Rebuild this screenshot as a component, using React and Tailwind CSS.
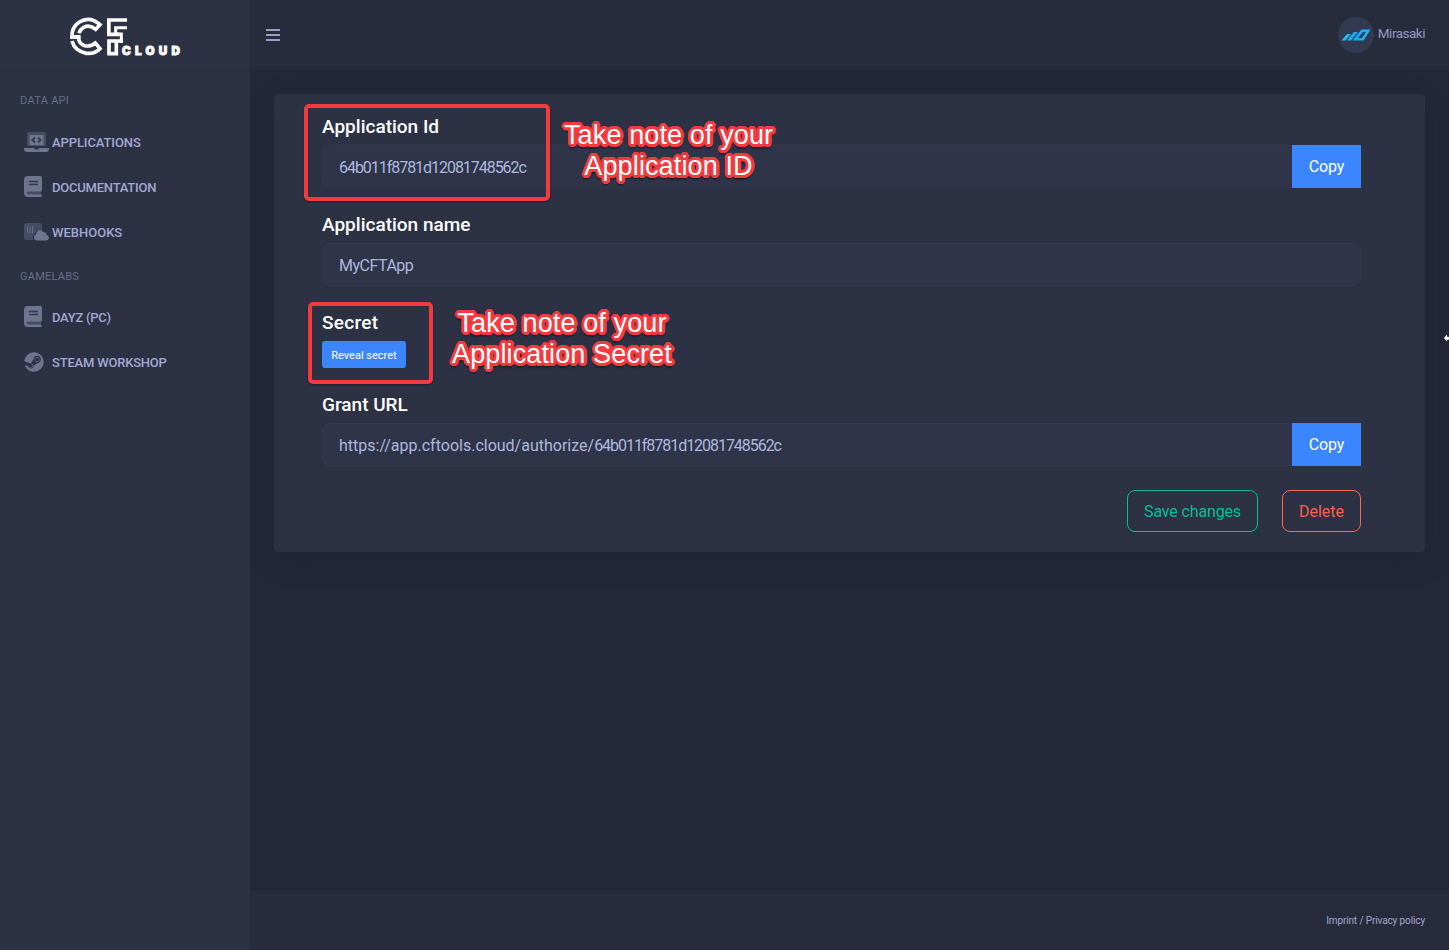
import { FaSteam } from "react-icons/fa";

function Logo() {
  return (
    <svg className="h-[40px] w-[113px] overflow-visible" viewBox="60 36 339 120" fill="none" aria-label="CF Cloud">
      <g stroke="#fffffc" strokeWidth="11">
        <path d="M92 98H66Q64 70 87 54Q119 33 150 61L137 75Q119 60 101 69Q91 74 87 87" transform="translate(0 -2)" />
        <path d="M61 96H85Q86 116 104 122Q122 126 136 114L150 131Q135 147 109 145Q74 138 66 108" />
        <path d="M231 45H176.500V88H208" />
        <path d="M231 68H197V87H214V113" strokeWidth="9" />
        <path d="M219 108H177V146H199V108" />
      </g>
      <text x="216" y="149" fill="#fffffc" stroke="#fffffc" strokeWidth="2.500" fontFamily="Inter, sans-serif" fontWeight="900" fontSize="35" textLength="174" lengthAdjust="spacing">CLOUD</text>
    </svg>
  );
}

function LaptopIcon() {
  return (
    <svg className="h-5 w-[25px]" viewBox="0 0 25 20">
      <path d="M3 14V2Q3 0 5 0H20Q22 0 22 2V14H19V3H6V14Z" fill="#474c65" />
      <path d="M5.500 3H19.500V13.500H5.500Z M0 16H10L11 17.500H14L15 16H25V17Q25 20 22 20H3Q0 20 0 17Z" fill="#6f748f" />
      <path d="M11 5.500L8.500 8L11 10.500M14 5.500L16.500 8L14 10.500" fill="none" stroke="#363b51" strokeWidth="2" />
    </svg>
  );
}

function BookIcon() {
  return (
    <svg className="h-[21px] w-[18px]" viewBox="0 0 18 21">
      <path d="M4 0H16.500Q18 0 18 1.500V14Q18 15.200 17 15.700V19Q18 19.400 18 20Q18 21 17 21H4Q0 21 0 17V4Q0 0 4 0Z" fill="#6f748f" />
      <path d="M4 15.600H17V18.400H4Q2.500 18.400 2.500 17Q2.500 15.600 4 15.600Z" fill="#474c65" />
      <path d="M5 5.500H14M5 8.500H14" stroke="#34394f" strokeWidth="1.300" />
    </svg>
  );
}

function CloudIcon() {
  return (
    <svg className="h-[18px] w-[25px]" viewBox="0 0 25 18">
      <path d="M2 0H16Q18 0 18 2V7Q12 5 11 11Q8 13 9.500 17H2Q0 17 0 15V2Q0 0 2 0Z" fill="#474c65" />
      <path d="M3.500 3V10M6 3V10M8.500 3V10" stroke="#686d88" strokeWidth="1" />
      <path d="M13 17.500Q10 17 10 14.200Q10 12 12 11.500Q12 7.500 15.500 7Q18 7 19.500 9.300Q22.500 8.500 22.500 11.700Q25 12.500 25 14.800Q24.500 17.500 22 17.500Z" fill="#6f748f" />
    </svg>
  );
}

function NavItem({ icon, label, track }) {
  return (
    <a className="flex h-[45px] items-center pl-6">
      <span className="flex w-7 shrink-0 items-center pb-0.5">{icon}</span>
      <span className={`whitespace-nowrap text-[13px] font-medium text-[#a3a8d2] ${track}`}>{label}</span>
    </a>
  );
}

function Field({ label, value, copy }) {
  return (
    <div>
      <h2 className="h-[27px] text-[19px] leading-[17px] font-medium text-white">{label}</h2>
      <div className="flex h-[43px]">
        <div className={`flex flex-1 items-center border border-[#34394e] bg-[#2f3448] px-4 pt-0.5 text-base text-[#aeb8df] ${copy ? "rounded-l-lg border-r-0" : "rounded-lg"}`}>
          {value}
        </div>
        {copy && <button className="w-[69px] bg-[#3b86ff] text-base tracking-[-0.150px] text-white">Copy</button>}
      </div>
    </div>
  );
}

function Note({ place, first, second }) {
  return (
    <div className={`absolute whitespace-nowrap text-center font-['Liberation_Sans',Arial,sans-serif] text-[27px] leading-[31px] tracking-[0.120px] text-white [text-shadow:3px_0_#f33b3f,2.8px_1.1px_#f33b3f,2.1px_2.1px_#f33b3f,1.1px_2.8px_#f33b3f,0_3px_#f33b3f,-1.1px_2.8px_#f33b3f,-2.1px_2.1px_#f33b3f,-2.8px_1.1px_#f33b3f,-3px_0_#f33b3f,-2.8px_-1.1px_#f33b3f,-2.1px_-2.1px_#f33b3f,-1.1px_-2.8px_#f33b3f,0_-3px_#f33b3f,1.1px_-2.8px_#f33b3f,2.1px_-2.1px_#f33b3f,2.8px_-1.1px_#f33b3f,1px_4px_2px_#151722,-1px_4px_2px_#151722] ${place}`}>
      {first}<br />{second}
    </div>
  );
}

export default function App() {
  return (
    <div className="relative flex h-[950px] w-full overflow-hidden bg-[#242737] font-[Roboto,sans-serif]">
      <aside className="flex w-[250px] shrink-0 flex-col bg-[#2c3144]">
        <div className="flex h-[71px] border-b border-[#2a2e41] pt-[17px] pl-[70px]"><Logo /></div>
        <p className="mt-[22px] h-[27px] pl-5 text-[11px] leading-4 tracking-[0.300px] text-[#696e88]">DATA API</p>
        <NavItem icon={<LaptopIcon />} label="APPLICATIONS" track="tracking-[-0.1px]" />
        <NavItem icon={<BookIcon />} label="DOCUMENTATION" track="tracking-[-0.220px]" />
        <NavItem icon={<CloudIcon />} label="WEBHOOKS" track="tracking-[0px]" />
        <p className="mt-[14px] h-[26px] pl-5 text-[11px] leading-4 tracking-[0.250px] text-[#696e88]">GAMELABS</p>
        <NavItem icon={<BookIcon />} label="DAYZ (PC)" track="tracking-[-0.250px]" />
        <NavItem icon={<FaSteam className="size-5 text-[#6f748f]" />} label="STEAM WORKSHOP" track="tracking-[-0.200px]" />
      </aside>

      <div className="flex flex-1 flex-col">
        <header className="flex h-[70px] items-center justify-between bg-[#282b3c] pr-6 pl-4">
          <button className="flex w-[14px] flex-col gap-[3px]">
            <span className="h-0.5 bg-[#9a9dc8]" />
            <span className="h-0.5 bg-[#9a9dc8]" />
            <span className="h-0.5 bg-[#9a9dc8]" />
          </button>
          <div className="flex items-center gap-1">
            <span className="flex size-9 items-center justify-center rounded-full bg-[#333950]">
              <svg className="h-3 w-7 overflow-visible" viewBox="0 0 28 12" fill="none">
                <defs>
                  <linearGradient id="mark" x1="0" y1="0" x2="28" y2="12" gradientUnits="userSpaceOnUse">
                    <stop stopColor="#23d6ef" /><stop offset=".5" stopColor="#13a6f6" /><stop offset="1" stopColor="#19c5ff" />
                  </linearGradient>
                </defs>
                <path d="M-0.500 11.500L5 5H9L3.500 11.500ZM5 11.500L12 3H16L9 11.500ZM10.500 11.500L19.500 .5H28.500L21.500 11.500ZM16 9H20L24 3H21Z" fill="url(#mark)" fillRule="evenodd" />
              </svg>
            </span>
            <span className="pb-[3px] text-[13.500px] tracking-[-0.500px] text-[#9599c0]">Mirasaki</span>
          </div>
        </header>

        <main className="flex-1 px-6 pt-6">
          <section className="flex h-[458px] flex-col rounded-[4px] bg-[#2c3144] pt-6 pr-16 pl-12 shadow-[0_8px_30px_rgba(25,28,45,0.2)]">
            <div className="h-[98px] [&>div>div>div]:tracking-[-1.040px]"><Field label="Application Id" value="64b011f8781d12081748562c" copy /></div>
            <div className="h-[98px] [&>div>div>div]:tracking-[-0.500px]"><Field label="Application name" value="MyCFTApp" /></div>
            <div className="h-[82px]">
              <h2 className="h-[27px] text-[19px] leading-[17px] font-medium tracking-[0.300px] text-white">Secret</h2>
              <button className="block h-[27px] w-[84px] rounded-[3px] bg-[#3b86ff] pt-[3px] text-[11px] text-white">Reveal secret</button>
            </div>
            <Field
              label="Grant URL"
              value={<><span>https://app.cftools.cloud/authorize/</span><span className="tracking-[-1.040px]">64b011f8781d12081748562c</span></>}
              copy
            />
            <div className="mt-6 flex justify-end gap-6">
              <button className="h-[42px] w-[131px] rounded-lg border border-[#06bf9a] pt-0.5 text-base tracking-[-0.150px] text-[#06bf9a]">Save changes</button>
              <button className="h-[42px] w-[79px] rounded-lg border border-[#ff6650] pt-0.5 text-base text-[#ff5e49]">Delete</button>
            </div>
          </section>
        </main>

        <footer className="flex h-[60px] items-center justify-end bg-[#282b3c] pr-6 text-[10px] tracking-[-0.120px] text-[#a3a7cd]">Imprint / Privacy policy</footer>
      </div>

      <div className="absolute top-[104px] left-[304px] h-[97px] w-[246px] rounded-[5px] border-4 border-[#f33b3f] shadow-[0_1px_2px_rgba(0,0,0,0.4)]" />
      <div className="absolute top-[302px] left-[308px] h-[82px] w-[125px] rounded-[5px] border-4 border-[#f33b3f] shadow-[0_1px_2px_rgba(0,0,0,0.4)]" />
      <Note place="top-[120px] left-[564px] w-[209px]" first="Take note of your" second="Application ID" />
      <Note place="top-[308px] left-[451px] w-[222px]" first="Take note of your" second="Application Secret" />
      <svg className="absolute top-[332px] right-0 h-3 w-[6px]" viewBox="0 0 6 12">
        <path d="M0.500 6L4.500 1.500V4.500H7V8H4.500V10.500Z" fill="white" stroke="black" strokeWidth=".6" />
      </svg>
    </div>
  );
}
